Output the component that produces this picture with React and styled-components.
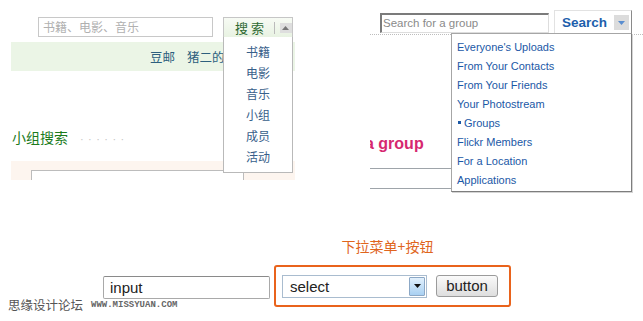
import styled, { createGlobalStyle } from 'styled-components';

const Global = createGlobalStyle`
    html, body { margin: 0; padding: 0; background: #fff; }
    * { box-sizing: border-box; }
`;

const CJK = `"Noto Sans CJK SC", "Noto Sans", sans-serif`;
const SANS = `"Liberation Sans", Arial, sans-serif`;

const doubanItems = ['书籍', '电影', '音乐', '小组', '成员', '活动'];
const flickrItems = [
    "Everyone's Uploads",
    'From Your Contacts',
    'From Your Friends',
    'Your Photostream',
    'Groups',
    'Flickr Members',
    'For a Location',
    'Applications',
];

export default function App() {
    return (
        <Page>
            <Global />
            <Top>
                <Douban />
                <Flickr />
            </Top>
            <Demo>
                <TextField>input</TextField>
                <Column>
                    <Caption>下拉菜单+按钮</Caption>
                    <Frame>
                        <SelectBox>
                            <span>select</span>
                            <SelectArrow>
                                <svg width="7" height="4" viewBox="0 0 7 4"><path d="M0 0h7L3.5 4z" fill="#111" /></svg>
                            </SelectArrow>
                        </SelectBox>
                        <PlainButton>button</PlainButton>
                    </Frame>
                </Column>
            </Demo>
            <Watermark>
                思缘设计论坛<small>WWW.MISSYUAN.COM</small>
            </Watermark>
        </Page>
    );
}

function Douban() {
    return (
        <DoubanPanel>
            <SearchRow>
                <DbInput>书籍、电影、音乐</DbInput>
                <DbButton>
                    <span>搜 索</span>
                    <DbSep />
                    <DbArrow>
                        <svg width="7" height="4" viewBox="0 0 7 4"><path d="M0 4h7L3.5 0z" fill="#777" /></svg>
                    </DbArrow>
                </DbButton>
            </SearchRow>
            <GreenBand>
                <NavLinks>
                    <span>豆邮</span>
                    <span>猪二的小组</span>
                </NavLinks>
            </GreenBand>
            <GroupTitle>
                小组搜索<Dots>· · · · · ·</Dots>
            </GroupTitle>
            <PeachBand>
                <OpenBox />
            </PeachBand>
            <DbMenu>
                {doubanItems.map(item => <DbItem key={item}>{item}</DbItem>)}
            </DbMenu>
        </DoubanPanel>
    );
}

function Flickr() {
    return (
        <FlickrPanel>
            <FlickrRow>
                <FkInput>Search for a group</FkInput>
                <FkButton>
                    Search
                    <FkArrow>
                        <svg width="7" height="4" viewBox="0 0 7 4"><path d="M0 0h7L3.5 4z" fill="#5a8ed0" /></svg>
                    </FkArrow>
                </FkButton>
            </FlickrRow>
            <DottedRule />
            <Heading><span>a group</span></Heading>
            <GrayRule $gap={14} />
            <GrayRule $gap={19} />
            <FkMenu>
                {flickrItems.map(item => (
                    <FkItem key={item}>
                        {item === 'Groups' && <Bullet />}
                        {item}
                    </FkItem>
                ))}
            </FkMenu>
        </FlickrPanel>
    );
}

//Style
const Page = styled.div`
    position: relative;
    width: 643px;
    height: 321px;
    overflow: hidden;
    background: #fff;
`;

const Top = styled.div`
    display: flex;
    height: 200px;
`;

const DoubanPanel = styled.div`
    position: relative;
    margin-left: 11px;
    width: 284px;
    height: 178px;
    font-family: ${CJK};
`;

const SearchRow = styled.div`
    display: flex;
    gap: 10px;
    padding: 17px 0 0 27px;
`;

const DbInput = styled.div`
    width: 175px;
    height: 20px;
    border: 1px solid #c8c8c8;
    padding-left: 4px;
    font-size: 12px;
    line-height: 18px;
    color: #b0b0b0;
`;

const DbButton = styled.div`
    display: flex;
    align-items: center;
    width: 70px;
    height: 20px;
    border: 1px solid #c6c6c6;
    border-bottom: none;
    background: linear-gradient(#f7fbf4, #e8f2e2);
    padding-left: 11px;
    font-size: 13px;
    color: #2f6a33;

    span { white-space: nowrap; }
`;

const DbSep = styled.i`
    width: 1px;
    height: 12px;
    margin-left: 10px;
    background: #bbb;
`;

const DbArrow = styled.i`
    display: flex;
    align-items: center;
    justify-content: center;
    width: 12px;
    height: 10px;
    margin-left: 5px;
    background: #dedede;
`;

const GreenBand = styled.div`
    display: flex;
    align-items: center;
    margin-top: 5px;
    height: 29px;
    padding-left: 139px;
    background: #ebf5e6;
    font-size: 12.5px;
    color: #2d5f7e;
`;

const NavLinks = styled.div`
    display: flex;
    gap: 12px;
    width: 73px;
    white-space: nowrap;
    overflow: hidden;
`;

const GroupTitle = styled.div`
    margin-top: 56px;
    padding-left: 1px;
    font-size: 14px;
    line-height: 20px;
    color: #1b7a1b;
`;

const Dots = styled.span`
    margin-left: 12px;
    font-family: ${SANS};
    font-size: 11px;
    letter-spacing: 0.7px;
    color: #c4c4c4;
`;

const PeachBand = styled.div`
    margin-top: 12px;
    height: 19px;
    padding: 9px 0 0 20px;
    background: #fdf5ef;
`;

const OpenBox = styled.div`
    width: 213px;
    height: 10px;
    border: 1px solid #bcbcbc;
    border-bottom: none;
    background: #fff;
`;

const DbMenu = styled.div`
    position: absolute;
    left: 212px;
    top: 37px;
    width: 70px;
    height: 136px;
    padding-top: 4px;
    border: 1px solid #b9b9b9;
    border-top: none;
    background: #fff;
`;

const DbItem = styled.div`
    height: 21px;
    line-height: 21px;
    text-align: center;
    font-size: 12px;
    color: #38608a;
`;

const FlickrPanel = styled.div`
    position: relative;
    margin-left: 75px;
    width: 273px;
    height: 200px;
    font-family: ${SANS};
`;

const FlickrRow = styled.div`
    display: flex;
    padding: 10px 0 0 10px;
    height: 34px;
`;

const FkInput = styled.div`
    margin-top: 3px;
    width: 169px;
    height: 20px;
    border: 1px solid #ddd;
    border-top: 2px solid #7b7b7b;
    border-left: 2px solid #7b7b7b;
    padding-left: 1px;
    font-size: 11.5px;
    line-height: 17px;
    color: #8a8a8a;
`;

const FkButton = styled.div`
    display: flex;
    align-items: center;
    margin-left: 5px;
    width: 78px;
    height: 24px;
    border-top: 1px solid #e2e2e2;
    border-left: 1px solid #e2e2e2;
    border-right: 1px solid #8a8a8a;
    padding-left: 7px;
    background: #fff;
    font-size: 13.5px;
    font-weight: bold;
    color: #1d5fac;
`;

const FkArrow = styled.i`
    display: flex;
    align-items: center;
    justify-content: center;
    width: 15px;
    height: 15px;
    margin-left: 7px;
    background: #dcdcdc;
`;

const DottedRule = styled.div`
    border-top: 1px dotted #bdbdbd;
`;

const Heading = styled.div`
    margin-top: 99px;
    width: 81px;
    overflow: hidden;
    white-space: nowrap;
    font-size: 16px;
    font-weight: bold;
    line-height: 20px;
    color: #d6286f;

    span { margin-left: -5px; }
`;

const GrayRule = styled.div`
    margin-top: ${p => p.$gap}px;
    width: 90px;
    border-top: 1px solid #9ea4aa;
`;

const FkMenu = styled.div`
    position: absolute;
    left: 81px;
    top: 33px;
    width: 181px;
    height: 159px;
    padding: 3px 0 0 5px;
    background: #fff;
    border: 1px solid #a6a6a6;
    border-right-color: #7d7d7d;
    border-bottom-color: #7d7d7d;
    box-shadow: 1px 1px 0 #d4d4d4;
`;

const FkItem = styled.div`
    display: flex;
    align-items: center;
    height: 19px;
    font-size: 11px;
    color: #1b58a6;
`;

const Bullet = styled.i`
    width: 3px;
    height: 3px;
    margin: 0 3px 0 1px;
    background: #1b58a6;
`;

const Demo = styled.div`
    display: flex;
    align-items: flex-end;
    gap: 4px;
    padding-left: 103px;
    margin-top: 37px;
`;

const TextField = styled.div`
    margin-bottom: 8px;
    width: 167px;
    height: 23px;
    border: 1px solid #a9a9a9;
    border-top-color: #8a8a8a;
    border-radius: 2px;
    padding-left: 6px;
    font-family: ${SANS};
    font-size: 15px;
    line-height: 21px;
    color: #222;
`;

const Column = styled.div`
    display: flex;
    flex-direction: column;
`;

const Caption = styled.div`
    padding-right: 10px;
    margin-bottom: 10px;
    text-align: center;
    font-family: ${CJK};
    font-size: 14px;
    line-height: 18px;
    color: #e0651d;
`;

const Frame = styled.div`
    display: flex;
    align-items: center;
    gap: 9px;
    width: 237px;
    height: 42px;
    padding-left: 6px;
    border: 2px solid #e9631c;
    border-radius: 3px;
`;

const SelectBox = styled.div`
    display: flex;
    align-items: center;
    justify-content: space-between;
    width: 145px;
    height: 23px;
    border: 1px solid #a9bccf;
    padding: 1px 1px 1px 7px;
    background: #fff;
    font-family: ${SANS};
    font-size: 15px;
    color: #222;
`;

const SelectArrow = styled.i`
    display: flex;
    align-items: center;
    justify-content: center;
    width: 16px;
    height: 19px;
    border: 1px solid #8ca8c6;
    border-radius: 1px;
    background: linear-gradient(#e2f0fc, #a8d0f2);
`;

const PlainButton = styled.div`
    width: 62px;
    height: 22px;
    border: 1px solid #9b9b9b;
    border-radius: 3px;
    background: linear-gradient(#fafafa, #dedede);
    text-align: center;
    font-family: ${SANS};
    font-size: 15px;
    line-height: 20px;
    color: #222;
`;

const Watermark = styled.div`
    position: absolute;
    left: 8px;
    top: 295px;
    display: flex;
    align-items: center;
    gap: 8px;
    font-family: ${CJK};
    font-size: 12.5px;
    color: #555;

    small {
        font-family: "Liberation Mono", monospace;
        font-size: 9px;
        font-weight: bold;
        color: #666;
    }
`;
